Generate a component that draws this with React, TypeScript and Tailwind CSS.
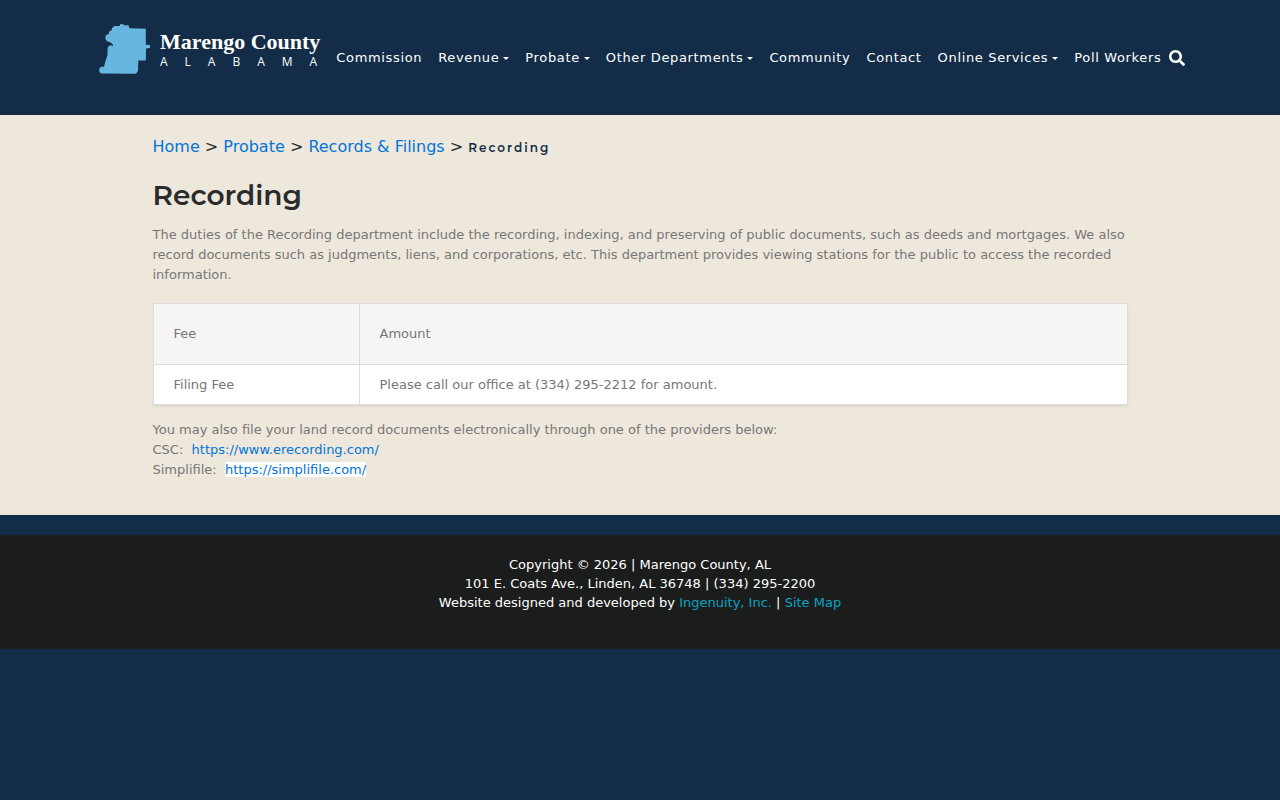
import { FaSearch } from "react-icons/fa";

const navItems = [
  { label: "Commission", dropdown: false },
  { label: "Revenue", dropdown: true },
  { label: "Probate", dropdown: true },
  { label: "Other Departments", dropdown: true },
  { label: "Community", dropdown: false },
  { label: "Contact", dropdown: false },
  { label: "Online Services", dropdown: true },
  { label: "Poll Workers", dropdown: false },
];

const breadcrumbs = ["Home", "Probate", "Records & Filings"];

const fees = [
  { name: "Filing Fee", amount: "Please call our office at (334) 295-2212 for amount." },
];

const Logo = () => (
  <a href="#" className="flex shrink-0 gap-2 text-white">
    <svg viewBox="0 0 53 50" className="w-[53px] h-[50px]" aria-hidden="true">
      <path
        d="M10 7.500 L12.500 6.500 L13 4 L15.500 2 L20.500 2 L21.500 0 L24 .3 L25.500 1.300 L29.500 1.300 L30.500 4.300 L46.800 4.700 L46.800 20.700 L51 21 L51 24 L47 24.500 L46.800 36.500 L39.300 36.500 L39 47 L37 49.700 L2 49.500 L.5 48 L0 45 L2.200 42.700 L5 42.700 L6.500 37 L8.500 31 L8.600 24 L10 21.800 L12 21.200 L13.800 22.300 L13.800 20.500 L11.500 18.500 L8 17.300 L6.200 14.500 L7 11 L9.800 10 Z"
        fill="#67b6e0"
      />
    </svg>
    <span className="flex flex-col pt-[6px]">
      <span className="font-['Liberation_Serif',serif] text-[22px] font-bold leading-6">
        Marengo County
      </span>
      <span className="font-['Open_Sans',sans-serif] text-xs leading-4 tracking-[17px] -mr-[17px]">
        ALABAMA
      </span>
    </span>
  </a>
);

const Header = () => (
  <header className="min-h-[115px] pt-6">
    <div className="max-w-[1110px] mx-auto pl-[14px] flex items-start">
      <Logo />
      <nav className="flex items-center ml-2 pt-[23px] text-[13px] leading-[21px] tracking-wider text-white whitespace-nowrap">
        {navItems.map((item) => (
          <a key={item.label} href="#" className="flex items-center px-2">
            {item.label}
            {item.dropdown && (
              <span className="ml-1 mt-px border-x-[3px] border-t-[3px] border-x-transparent border-t-white" />
            )}
          </a>
        ))}
        <button type="button" aria-label="Search" className="cursor-pointer">
          <FaSearch className="size-4" />
        </button>
      </nav>
    </div>
  </header>
);

const FeeTable = () => (
  <table className="w-full mt-[18px] border-collapse bg-white text-left shadow-[0_2px_2px_rgba(0,0,0,0.06)]">
    <thead className="bg-[#f5f5f5]">
      <tr className="h-[61px]">
        <th className="w-[206px] px-5 font-normal border border-[#dddddd]">Fee</th>
        <th className="px-5 font-normal border border-[#dddddd]">Amount</th>
      </tr>
    </thead>
    <tbody>
      {fees.map((fee) => (
        <tr key={fee.name} className="h-10">
          <td className="px-5 border border-[#dddddd]">{fee.name}</td>
          <td className="px-5 border border-[#dddddd]">{fee.amount}</td>
        </tr>
      ))}
    </tbody>
  </table>
);

const App = () => {
  return (
    <div className="min-h-screen bg-[#132d49] font-['DejaVu_Sans',sans-serif]">
      <Header />

      <main className="bg-[#eee7db] pt-5 pb-[35px]">
        <div className="max-w-[975px] mx-auto text-[13px] leading-5 text-[#777777]">
          <div className="text-base leading-6 text-[#292b2c]">
            {breadcrumbs.map((crumb) => (
              <span key={crumb}>
                <a href="#" className="text-[#0275d8]">
                  {crumb}
                </a>
                {" > "}
              </span>
            ))}
            <span className="font-[Montserrat,Inter,sans-serif] text-xs font-semibold tracking-[2px] text-[#132d49]">
              Recording
            </span>
          </div>

          <h1 className="mt-[18px] mb-3 font-[Montserrat,Inter,sans-serif] text-[28px] leading-9 font-semibold text-[#292b2c]">
            Recording
          </h1>

          <p>
            The duties of the Recording department include the recording,
            indexing, and preserving of public documents, such as deeds and
            mortgages. We also record documents such as judgments, liens, and
            corporations, etc. This department provides viewing stations for the
            public to access the recorded information.
          </p>

          <FeeTable />

          <p className="mt-[15px]">
            You may also file your land record documents electronically through
            one of the providers below:
            <br />
            CSC:&nbsp;{" "}
            <a href="https://www.erecording.com/" className="text-[#0275d8]">
              https://www.erecording.com/
            </a>
            <br />
            Simplifile:&nbsp;{" "}
            <a href="https://simplifile.com/" className="bg-white text-[#0275d8]">
              https://simplifile.com/
            </a>
          </p>
        </div>
      </main>

      <footer className="mt-5 bg-[#1b1d1c] pt-5 pb-[37px] text-center text-[13px] leading-[19px] text-white">
        <p>Copyright © 2026 | Marengo County, AL</p>
        <p>101 E. Coats Ave., Linden, AL 36748 | (334) 295-2200</p>
        <p>
          Website designed and developed by{" "}
          <a href="#" className="text-[#0aa3c2]">
            Ingenuity, Inc.
          </a>{" "}
          |{" "}
          <a href="#" className="text-[#0aa3c2]">
            Site Map
          </a>
        </p>
      </footer>
    </div>
  );
};

export default App;
